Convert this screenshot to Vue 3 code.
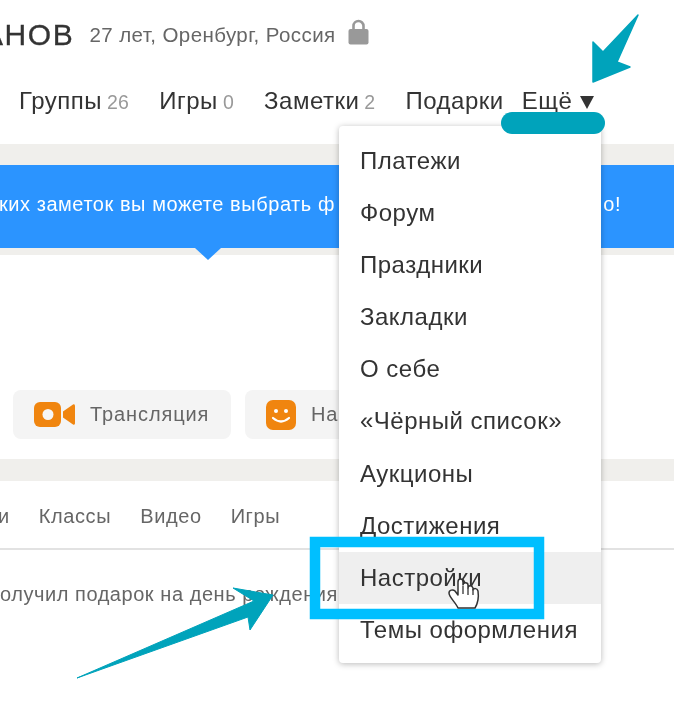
<script setup>
const nav = [
  { label: 'Группы', count: '26' },
  { label: 'Игры', count: '0' },
  { label: 'Заметки', count: '2' },
  { label: 'Подарки', count: '' },
]
const menu = ['Платежи', 'Форум', 'Праздники', 'Закладки', 'О себе', '«Чёрный список»', 'Аукционы', 'Достижения', 'Настройки', 'Темы оформления']
const tabs = ['Классы', 'Видео', 'Игры']
</script>

<template>
  <div class="page">
    <div class="content">
      <header class="head">
        <span class="name">АНОВ</span>
        <span class="meta">27 лет, Оренбург, Россия</span>
        <svg class="lock" viewBox="0 0 21 26" width="21" height="26">
          <path d="M5.5 11V7a5 5 0 0 1 10 0v4" fill="none" stroke="#999" stroke-width="2.6" />
          <rect x="0.5" y="10" width="20" height="15.5" rx="2" fill="#999" />
        </svg>
      </header>
      <nav class="nav">
        <span v-for="n in nav" :key="n.label" class="nav-item">{{ n.label }}<small v-if="n.count" class="count">{{ n.count }}</small></span>
        <span class="nav-item nav-more">Ещё <i class="caret"></i></span>
      </nav>
      <div class="band"></div>
      <div class="notice">
        <span class="notice-left">ких заметок вы можете выбрать ф</span>
        <span class="notice-right">о!</span>
      </div>
      <div class="notice-foot"><i class="notice-tip"></i></div>
      <div class="actions">
        <div class="action action-first">
          <svg viewBox="0 0 41 25" width="41" height="25">
            <rect x="0" y="0" width="27" height="25" rx="6" fill="#f0850f" />
            <circle cx="14" cy="12.5" r="5.5" fill="#f6f6f6" />
            <path d="M29 9.5 39 2.5a1.5 1.5 0 0 1 2 1V21.5a1.5 1.5 0 0 1-2 1L29 15.5Z" fill="#f0850f" />
          </svg>
          <span>Трансляция</span>
        </div>
        <div class="action">
          <svg viewBox="0 0 30 30" width="30" height="30">
            <rect width="30" height="30" rx="7" fill="#f0850f" />
            <circle cx="10" cy="11" r="2" fill="#fff" />
            <circle cx="20" cy="11" r="2" fill="#fff" />
            <path d="M7 18q8 7 16 0" fill="none" stroke="#fff" stroke-width="2.2" stroke-linecap="round" />
          </svg>
          <span>На</span>
        </div>
      </div>
      <div class="band band-second"></div>
      <div class="tabs">
        <span class="tab-cut">и</span>
        <span v-for="t in tabs" :key="t">{{ t }}</span>
      </div>
      <p class="feed">олучил подарок на день рождения</p>
    </div>

    <ul class="menu">
      <li v-for="m in menu" :key="m" :class="{ active: m === 'Настройки' }">{{ m }}</li>
    </ul>

    <svg class="marks" viewBox="0 0 674 719" width="674" height="719">
      <polygon points="593,42 603,52 638,15 617,62 630,67 593,82" fill="#00a3bb" stroke="#00a3bb" stroke-width="1.5" stroke-linejoin="round" />
      <rect x="501" y="112" width="104" height="22" rx="11" fill="#00a3bb" />
      <polygon points="77,678 254,601 233,588 273,595 250,630 248,617" fill="#00a3bb" stroke="#00a3bb" stroke-linejoin="round" />
      <rect x="315" y="542" width="224" height="72" fill="none" stroke="#00bfff" stroke-width="10.5" />
      <path d="M458 608c-2-5-9-11-9-15 0-3 4-4 6-2l3 4v-13c0-4 5-4 5 0v3c0-3 5-3 5 0v3c0-3 4-3 5 0v2c1-2 4-2 5 1 1 7 0 12-3 17Z" fill="#fff" stroke="#333" stroke-width="1.5" stroke-linejoin="round" />
      <path d="M463 586v8M468 588v7M473 589v6" fill="none" stroke="#444" stroke-width="1.4" />
    </svg>
  </div>
</template>

<style scoped>
.page {
  position: relative;
  width: 674px;
  height: 719px;
  overflow: hidden;
  background: #fff;
  font-family: "Liberation Sans", Arial, sans-serif;
  color: #333;
}
.content {
  filter: blur(0.35px);
}
.head {
  display: flex;
  align-items: center;
  height: 50px;
  padding-top: 10px;
  margin-left: -17px;
}
.name {
  font-size: 30px;
  letter-spacing: 1.6px;
  color: #333;
  -webkit-text-stroke: 0.3px #333;
}
.meta {
  margin-left: 15px;
  font-size: 20.5px;
  letter-spacing: 0.42px;
  color: #666;
}
.lock {
  margin-left: 12px;
  margin-top: -7px;
}
.nav {
  display: flex;
  align-items: center;
  gap: 30px;
  height: 36px;
  margin-top: 23px;
  padding-left: 19px;
  font-size: 24px;
  letter-spacing: 0.5px;
  color: #333;
}
.nav-item {
  white-space: nowrap;
}
.nav-more {
  margin-left: -12px;
}
.count {
  margin-left: 5px;
  font-size: 19.5px;
  letter-spacing: 0.3px;
  color: #999;
}
.caret {
  display: inline-block;
  width: 0;
  height: 0;
  margin-left: 1px;
  border: 7.5px solid transparent;
  border-top: 13px solid #333;
  border-bottom: 0;
}
.band {
  height: 21px;
  margin-top: 25px;
  background: #f0efec;
}
.notice {
  display: flex;
  align-items: center;
  justify-content: space-between;
  height: 83px;
  padding: 0 53px 4px 0;
  box-sizing: border-box;
  background: #2b94ff;
  color: #fff;
  font-size: 20px;
  letter-spacing: 0.55px;
}
.notice-left {
  margin-left: -1px;
}
.notice-foot {
  position: relative;
  height: 7px;
  background: #f0efec;
}
.notice-tip {
  position: absolute;
  left: 195px;
  top: 0;
  border: 13px solid transparent;
  border-top: 12px solid #2b94ff;
  border-bottom: 0;
}
.actions {
  display: flex;
  gap: 14px;
  margin-top: 135px;
  padding-left: 13px;
}
.action {
  display: flex;
  align-items: center;
  gap: 15px;
  height: 49px;
  padding: 0 21px;
  border-radius: 8px;
  background: #f4f4f4;
  color: #666;
  font-size: 20px;
  letter-spacing: 0.9px;
}
.action-first {
  width: 218px;
  box-sizing: border-box;
}
.band-second {
  margin-top: 20px;
  height: 22px;
}
.tabs {
  display: flex;
  align-items: center;
  gap: 29px;
  height: 69px;
  padding-top: 4px;
  border-bottom: 2px solid #e2e2e2;
  box-sizing: border-box;
  font-size: 20px;
  letter-spacing: 0.6px;
  color: #666;
}
.tab-cut {
  margin-left: -2px;
}
.feed {
  margin: 33px 0 0;
  font-size: 20px;
  letter-spacing: 0.55px;
  color: #666;
  white-space: nowrap;
}
.menu {
  position: absolute;
  left: 339px;
  top: 126px;
  box-sizing: border-box;
  width: 262px;
  height: 537px;
  margin: 0;
  padding: 8.5px 0 0;
  list-style: none;
  background: #fff;
  border-radius: 4px;
  box-shadow: 0 1px 6px rgba(0, 0, 0, 0.28);
  filter: blur(0.3px);
}
.menu li {
  height: 52.2px;
  line-height: 52.2px;
  padding-left: 21px;
  font-size: 24px;
  letter-spacing: 0.5px;
  color: #333;
  white-space: nowrap;
}
.menu li.active {
  background: #efefef;
}
.marks {
  position: absolute;
  left: 0;
  top: 0;
}
</style>
